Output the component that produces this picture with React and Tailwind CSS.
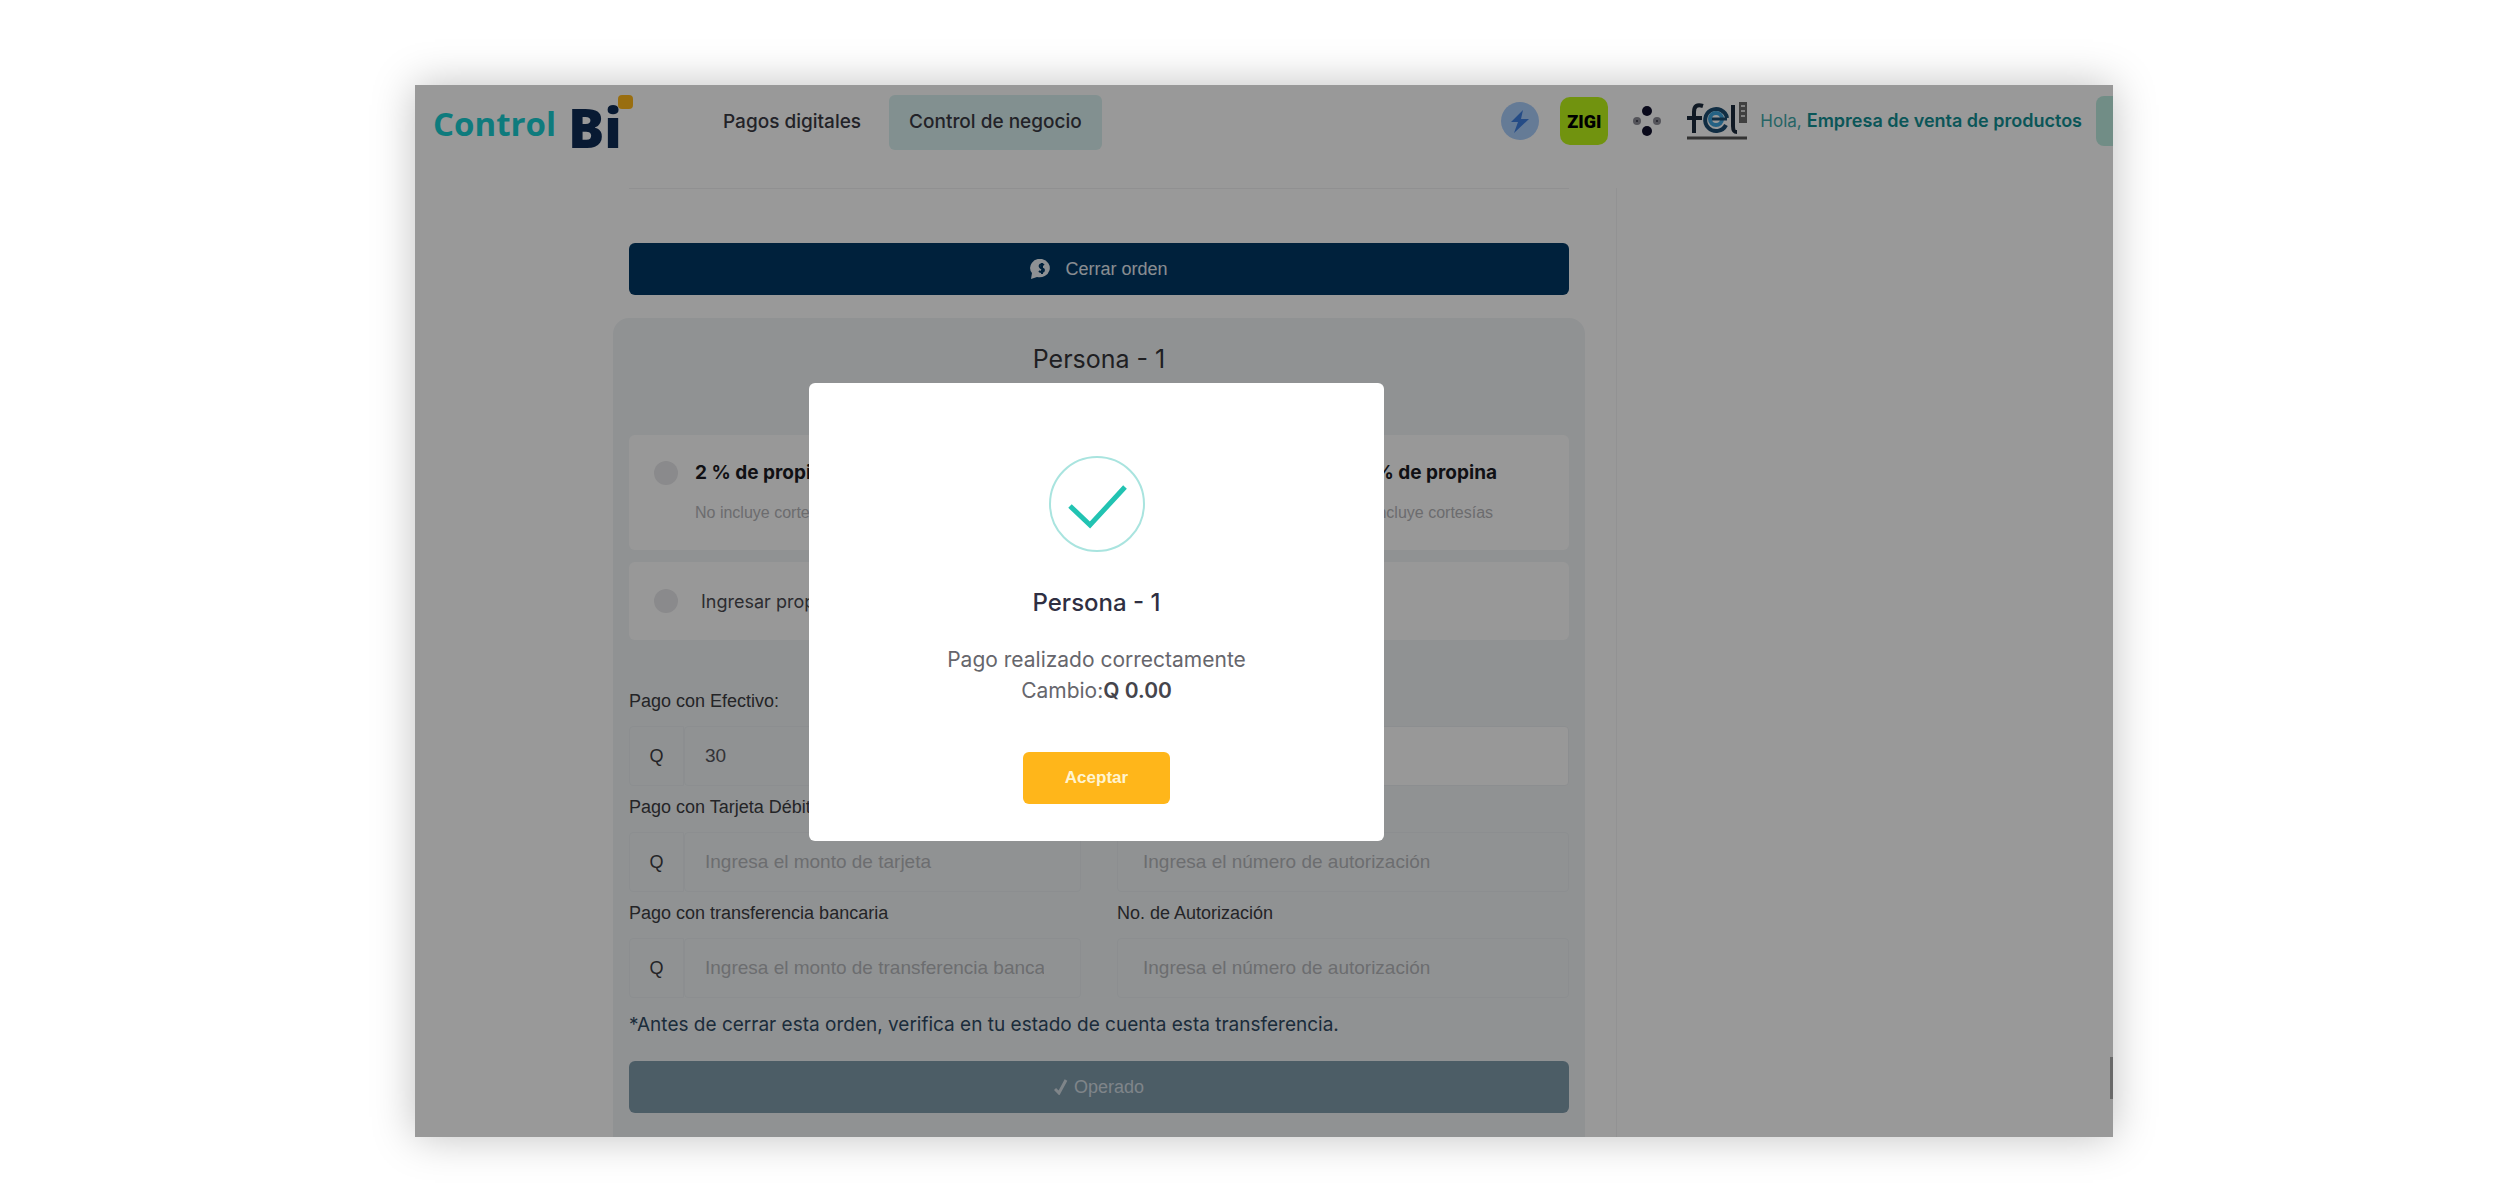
const inter = "font-['Inter',sans-serif]";

function Logo() {
  return (
    <a href="#inicio" aria-label="Control Bi" className="relative flex h-[56px] w-[200px] items-center gap-[12px]">
      <span className="mt-[2px] font-['Open_Sans',sans-serif] text-[33px] leading-[40px] font-bold text-[#18cdd0]">Control</span>
      <span className="mt-[8px] font-['Open_Sans',sans-serif] text-[54px] leading-[56px] font-extrabold text-[#0e2c55]">Bi</span>
      <span className="absolute top-0 right-0 h-[14px] w-[15px] rounded-[4px] bg-[#ffb81c]" />
    </a>
  );
}

function HeaderIcons() {
  return (
    <div className="flex items-center gap-[20px]">
      <svg width="40" height="40" viewBox="0 0 40 40" aria-label="Pagos">
        <circle cx="20" cy="20" r="19" fill="#a9cdfb" />
        <path d="M23 9 11 21h7l-4 11 15-14h-8z" fill="#3f7fe0" />
      </svg>
      <span className="flex h-[48px] w-[48px] items-center justify-center rounded-[10px] bg-[#bcf51a] font-['Roboto',sans-serif] text-[18px] font-black text-black">ZIGI</span>
      <svg width="30" height="32" viewBox="0 0 30 32" className="mx-[4px]" aria-label="Aplicaciones">
        <circle cx="15" cy="6" r="5" fill="#12122e" />
        <circle cx="15" cy="26" r="5" fill="#12122e" />
        <circle cx="5" cy="16" r="4" fill="#8d8d96" />
        <circle cx="25" cy="16" r="4" fill="#8d8d96" />
        <circle cx="5" cy="16" r="1" fill="#33333f" />
        <circle cx="25" cy="16" r="1" fill="#33333f" />
      </svg>
      <svg width="62" height="40" viewBox="0 0 62 40" aria-label="FEL">
        <g fill="none" stroke="#1c2a3c" strokeWidth="4">
          <path d="M17 5c-6-2-9 0-9 6v21M1 17h15" />
          <path d="M47 4v21c0 5 1 6 4 6" />
        </g>
        <path d="M40 24a11 11 0 1 1 1-7" fill="none" stroke="#1c4c70" strokeWidth="4" />
        <circle cx="30" cy="18" r="6" fill="none" stroke="#3fa4dc" strokeWidth="4" />
        <path d="M26 18h15" stroke="#1c4c70" strokeWidth="3" />
        <path d="M53 1h8v21h-8z" fill="#6b6b6b" />
        <path d="M55 5h4M55 10h4M55 15h4" stroke="#d8d8d8" strokeWidth="2" />
        <path d="M1 37h60" stroke="#555" strokeWidth="3" />
      </svg>
    </div>
  );
}

function Header() {
  return (
    <header className="flex h-[103px] shrink-0 items-start pt-[10px] pl-[18px]">
      <Logo />
      <nav className={`${inter} ml-[70px] flex h-[55px] items-center text-[19px] font-medium whitespace-nowrap text-[#3a3a44]`}>
        <a href="#pagos" className="px-[20px]">Pagos digitales</a>
        <a href="#negocio" className="ml-[8px] flex h-[55px] items-center rounded-[6px] bg-[#d9f1f0] px-[20px]">Control de negocio</a>
      </nav>
      <div className="ml-auto flex h-[52px] items-center">
        <HeaderIcons />
        <p className={`${inter} mr-[14px] ml-[12px] text-[18px] whitespace-nowrap text-[#3fa9aa]`}>
          <span className="text-[17px]">Hola,</span> <b className="font-semibold text-[#128f93]">Empresa de venta de productos</b>
        </p>
        <button aria-label="Menú" className="h-[50px] w-[17px] rounded-l-[8px] bg-[#bcece0]" />
      </div>
    </header>
  );
}

function Tip({ value }) {
  return (
    <label className="grid grid-cols-[26px_auto] items-center gap-x-[15px]">
      <input type="radio" name="tip" className="h-[24px] w-[24px] appearance-none rounded-full bg-[#e6e6e9]" />
      <span className={`${inter} text-[19px] leading-[24px] font-bold text-[#1c1c24]`}>{value} % de propina</span>
      <span className="col-start-2 mt-[18px] text-[16px] leading-[20px] text-[#b4b4b8]">No incluye cortesías</span>
    </label>
  );
}

const box = "h-[60px] min-w-0 flex-1 rounded-[4px] border border-[#e9edf0] text-[19px] text-[#55555c] placeholder:text-[#b4b6ba]";

function Amount({ id, label, placeholder, value }) {
  return (
    <div className="flex flex-col gap-[4px]">
      <label htmlFor={id} className="text-[18px] leading-[42px] text-[#3c3c42]">{label}</label>
      <div className="flex">
        <span className="flex h-[60px] w-[55px] items-center justify-center rounded-l-[4px] border border-[#e9edf0] text-[18px] text-[#3c3c42]">Q</span>
        <input id={id} className={`${box} pr-[36px] pl-[20px]`} placeholder={placeholder} defaultValue={value} />
      </div>
    </div>
  );
}

function Authorization({ id, label, placeholder }) {
  return (
    <div className="flex flex-col gap-[4px]">
      <label htmlFor={id} className="text-[18px] leading-[42px] text-[#3c3c42]">{label}</label>
      <div className="flex">
        <input id={id} className={`${box} px-[25px]`} placeholder={placeholder} />
      </div>
    </div>
  );
}

function OrderForm() {
  return (
    <section className="mx-[-16px] mt-[23px] flex flex-1 flex-col rounded-t-[16px] bg-[#f1f4f6] px-[16px] pb-[24px]">
      <h2 className={`${inter} mt-[25px] text-center text-[25px] leading-[32px] text-[#34343a]`}>Persona - 1</h2>
      <div className="mt-[60px] flex h-[115px] items-start justify-between rounded-[6px] bg-[#fefefe] pt-[26px] pr-[72px] pl-[25px]">
        <Tip value="2" />
        <Tip value="5" />
        <Tip value="10" />
      </div>
      <label className={`${inter} mt-[12px] flex h-[78px] items-center gap-[23px] rounded-[6px] bg-[#fefefe] pl-[25px] text-[18px] text-[#4a4a50]`}>
        <input type="radio" name="tip" className="h-[24px] w-[24px] appearance-none rounded-full bg-[#e6e6e9]" />
        Ingresar propina
      </label>
      <div className="mt-[40px] grid grid-cols-2 gap-x-[36px]">
        <Amount id="cash" label="Pago con Efectivo:" value="30" />
        <div className="flex items-end">
          <input aria-label="Cambio" className={`${box} bg-[#fefefe] px-[25px]`} />
        </div>
        <Amount id="card" label="Pago con Tarjeta Débito/Crédito" placeholder="Ingresa el monto de tarjeta" />
        <Authorization id="card-auth" label="No. de Autorización" placeholder="Ingresa el número de autorización" />
        <Amount id="transfer" label="Pago con transferencia bancaria" placeholder="Ingresa el monto de transferencia bancaria" />
        <Authorization id="transfer-auth" label="No. de Autorización" placeholder="Ingresa el número de autorización" />
      </div>
      <p className={`${inter} mt-[13px] text-[19px] leading-[28px] text-[#2f4a63]`}>
        *Antes de cerrar esta orden, verifica en tu estado de cuenta esta transferencia.
      </p>
      <button className="mt-[22px] flex h-[52px] items-center justify-center gap-[6px] rounded-[6px] bg-[#7f9bab] text-[18px] text-[#d4dee5]">
        <svg width="14" height="16" viewBox="0 0 14 16" fill="none" stroke="currentColor" strokeWidth="3" aria-hidden="true">
          <path d="m1 10 4 4L12 1" />
        </svg>
        Operado
      </button>
    </section>
  );
}

function SuccessDialog() {
  return (
    <div role="dialog" aria-labelledby="dialog-title" className={`${inter} mt-[298px] flex h-[458px] w-[575px] flex-col items-center rounded-[6px] bg-white`}>
      <svg width="96" height="96" viewBox="0 0 96 96" fill="none" className="mt-[73px]" aria-hidden="true">
        <circle cx="48" cy="48" r="47" stroke="#a9e4df" strokeWidth="2" />
        <path d="m21 50 20 19 35-38" stroke="#22c3b2" strokeWidth="5" />
      </svg>
      <h3 id="dialog-title" className="mt-[35px] text-[24px] leading-[32px] font-medium text-[#2f2f42]">Persona - 1</h3>
      <p className="mt-[25px] text-center text-[21px] leading-[31px] text-[#66666c]">
        Pago realizado correctamente<br />
        Cambio:<b className="font-semibold text-[#45454c]">Q 0.00</b>
      </p>
      <button className="mt-[46px] h-[52px] w-[147px] rounded-[6px] bg-[#ffb61a] font-['Liberation_Sans',Arial,sans-serif] text-[17px] font-bold text-[#fff4d0]">Aceptar</button>
    </div>
  );
}

export default function App() {
  return (
    <div className="flex min-h-screen flex-col bg-white pt-[85px] pr-[387px] pb-[63px] pl-[415px] font-['Liberation_Sans',Arial,sans-serif]">
      <div className="relative flex flex-1 flex-col overflow-hidden bg-white shadow-[0_0_40px_rgba(0,0,0,0.25)]">
        <Header />
        <div className="flex flex-1">
          <main className="ml-[214px] flex flex-1 flex-col border-t border-[#f0f0f2]">
            <button className="mt-[54px] flex h-[52px] items-center justify-center gap-[12px] rounded-[6px] bg-[#003865] text-[18px] text-[#e4ebf2]">
              <svg width="23" height="20" viewBox="0 0 23 20" aria-hidden="true">
                <path d="M12 0a10 9 0 1 1-5 18L1 20l1-6A10 9 0 0 1 12 0z" fill="#edf2f7" />
                <path d="M14 6c-3-2-5 0-4 2s4 1 4 3-3 3-5 1M12 4v11" fill="none" stroke="#003865" strokeWidth="2" />
              </svg>
              Cerrar orden
            </button>
            <OrderForm />
          </main>
          <aside className="ml-[47px] w-[497px] border-l border-[#f3f3f5]" />
        </div>
        <div className="absolute right-0 bottom-[38px] h-[42px] w-[3px] bg-[#b0b0b0]" />
        <div className="absolute inset-0 flex items-start justify-center bg-black/40 pr-[335px]">
          <SuccessDialog />
        </div>
      </div>
    </div>
  );
}
